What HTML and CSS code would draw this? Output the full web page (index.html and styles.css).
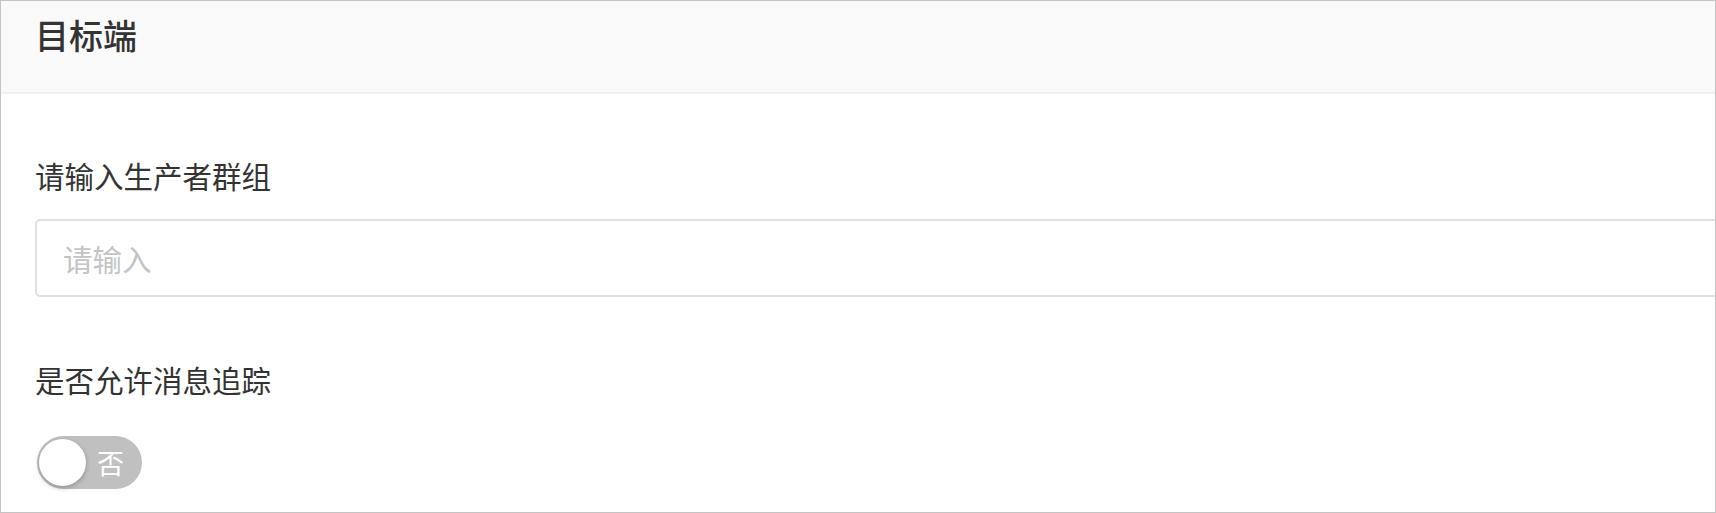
FILE: index.html
```html
<!DOCTYPE html>
<html lang="zh-CN">
<head>
<meta charset="utf-8">
<title>目标端</title>
<link rel="stylesheet" href="styles.css">
</head>
<body>
<div class="frame">
  <div class="header"><h2 class="title">目标端</h2></div>
  <div class="content">
    <div class="field">
      <label class="label">请输入生产者群组</label>
      <input class="input" type="text" placeholder="请输入">
    </div>
    <div class="field field-switch">
      <label class="label">是否允许消息追踪</label>
      <div class="switch">
        <span class="knob"></span>
        <span class="switch-text">否</span>
      </div>
    </div>
  </div>
</div>
</body>
</html>
```
FILE: styles.css
```css
* { box-sizing: border-box; }
html, body { margin: 0; padding: 0; background: #fff; }
body { font-family: "Noto Sans CJK SC", "Noto Sans", sans-serif; }
.frame {
  width: 1716px;
  height: 513px;
  border: 1px solid #c4c4c4;
  overflow: hidden;
  background: #fff;
}
.header {
  height: 93px;
  background: #f9f9f9;
  border-bottom: 2px solid #efefef;
  padding: 13px 0 0 34px;
}
.title {
  margin: 0;
  font-size: 34px;
  line-height: 41px;
  font-weight: 500;
  color: #333;
}
.content {
  padding: 0 0 0 34px;
}
.field { display: flex; flex-direction: column; }
.label {
  margin-top: 61px;
  font-size: 29.5px;
  line-height: 40px;
  color: #333;
}
.input {
  margin-top: 24px;
  width: 1720px;
  height: 78px;
  border: 2px solid #e0e0e0;
  border-radius: 5px;
  padding: 0 0 0 26px;
  font-family: inherit;
  font-size: 29.5px;
  color: #333;
  outline: none;
  background: #fff;
}
.input::placeholder { color: #c4c4c4; }
.field-switch .label { margin-top: 62px; }
.switch {
  margin: 37px 0 0 2px;
  width: 105px;
  height: 53px;
  border-radius: 27px;
  background: #c0c0c0;
  display: flex;
  align-items: center;
  padding-left: 2px;
}
.knob {
  width: 47px;
  height: 47px;
  border-radius: 50%;
  background: #fff;
  box-shadow: 0 2px 5px rgba(0,0,0,0.25);
  flex: none;
}
.switch-text {
  margin-left: 11px;
  font-size: 27px;
  line-height: 30px;
  color: #fff;
}
```
